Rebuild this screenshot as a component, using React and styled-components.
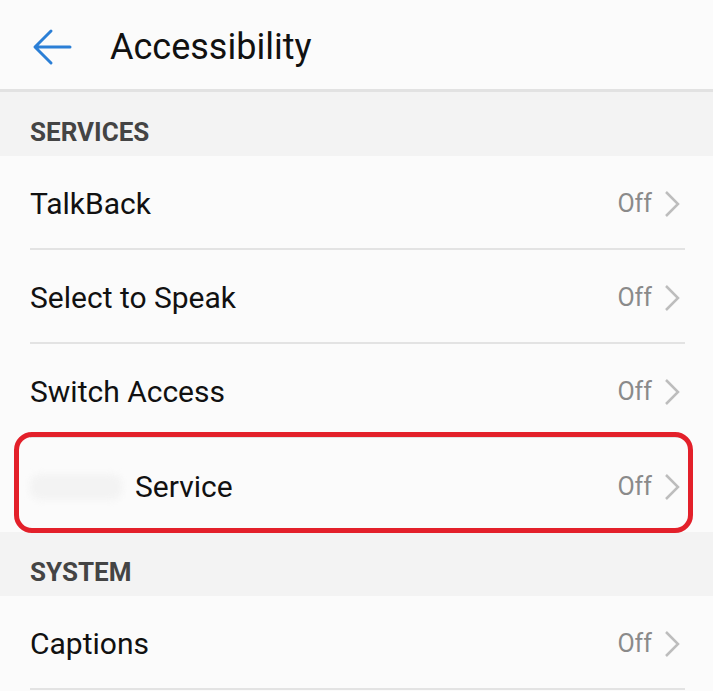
import styled, { createGlobalStyle } from 'styled-components';

const GlobalStyle = createGlobalStyle`
  body {
    margin: 0;
    background: #fafafa;
    font-family: Roboto, 'Noto Sans', sans-serif;
  }
`;

function BackArrow() {
  return (
    <svg width="40" height="40" viewBox="0 0 40 40" fill="none">
      <path d="M38 20H4M19 4L3 20l16 16" stroke="#2b7fd6" strokeWidth="3" strokeLinecap="round" strokeLinejoin="round" />
    </svg>
  );
}

function Chevron() {
  return (
    <svg width="16" height="28" viewBox="0 0 16 28" fill="none">
      <path d="M2 2l12 12L2 26" stroke="#bdbdbd" strokeWidth="2.5" />
    </svg>
  );
}

function Row({ label, blurred, last }) {
  return (
    <RowBox $last={last}>
      <Label>
        {blurred && <Smudge />}
        {label}
      </Label>
      <Status>Off</Status>
      <Chevron />
    </RowBox>
  );
}

function App() {
  return (
    <>
      <GlobalStyle />
      <Page>
        <Header>
          <BackArrow />
          <Title>Accessibility</Title>
        </Header>

        <Section>SERVICES</Section>
        <Row label="TalkBack" />
        <Row label="Select to Speak" />
        <Row label="Switch Access" />
        <Highlighted>
          <Row label="Service" blurred last />
          <RedFrame />
        </Highlighted>

        <Section>SYSTEM</Section>
        <Row label="Captions" />
      </Page>
    </>
  );
}

const Page = styled.div`
  width: 713px;
  height: 691px;
  overflow: hidden;
  background: #fbfbfb;
`;
const Header = styled.div`
  height: 92px;
  display: flex;
  align-items: center;
  padding: 4px 0 0 32px;
  box-sizing: border-box;
  gap: 38px;
  border-bottom: 3px solid #e2e2e2;
`;
const Title = styled.h1`
  margin: 0;
  font-weight: 400;
  font-size: 36px;
  color: #111;
`;
const Section = styled.div`
  height: 64px;
  display: flex;
  align-items: center;
  padding: 15px 0 0 30px;
  box-sizing: border-box;
  background: #f3f3f3;
  color: #444;
  font-weight: 700;
  font-size: 26px;
`;
const RowBox = styled.div`
  height: 94px;
  margin: 0 28px 0 30px;
  padding: 3px 5px 0 0;
  display: flex;
  align-items: center;
  border-bottom: ${p => (p.$last ? 'none' : '2px solid #e3e3e3')};
  box-sizing: border-box;
`;
const Label = styled.div`
  flex: 1;
  display: flex;
  align-items: center;
  font-size: 30px;
  color: #111;
`;
const Smudge = styled.span`
  width: 92px;
  height: 26px;
  margin-right: 13px;
  border-radius: 10px;
  background: #f3f3f3;
  filter: blur(3px);
`;
const Status = styled.span`
  font-size: 25px;
  color: #8a8a8a;
  margin-right: 12px;
`;
const Highlighted = styled.div`
  position: relative;
`;
const RedFrame = styled.div`
  position: absolute;
  left: 14px;
  right: 20px;
  top: -6px;
  bottom: -1px;
  border: 5px solid #e3202a;
  border-radius: 18px;
  pointer-events: none;
`;

export default App;
